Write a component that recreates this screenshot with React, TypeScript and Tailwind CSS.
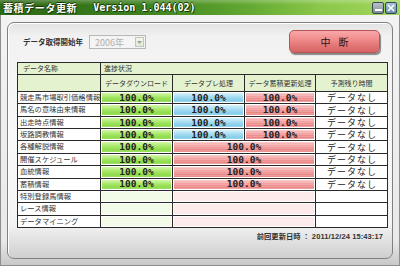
import React from "react";

const JP = "font-['Noto_Sans_CJK_JP','Noto_Sans',sans-serif]";
const MONO = "font-['DejaVu_Sans_Mono','Liberation_Mono',monospace]";

const names = [
  "競走馬市場取引価格情報",
  "馬名の意味由来情報",
  "出走時点情報",
  "坂路調教情報",
  "各種解説情報",
  "開催スケジュール",
  "血統情報",
  "蓄積情報",
  "特別登録馬情報",
  "レース情報",
  "データマイニング",
];

const GREEN =
  "bg-[linear-gradient(to_bottom,#d4f6ac,#a6e766_45%,#8edb4c_80%,#9fe064)]";
const BLUE =
  "bg-[linear-gradient(to_bottom,#d6f1fb,#a6dcf2_45%,#86cdea_80%,#98d5ee)]";
const RED =
  "bg-[repeating-linear-gradient(to_bottom,rgba(255,255,255,0.18)_0px,rgba(255,255,255,0.18)_1px,transparent_1px,transparent_2px),linear-gradient(to_bottom,#f8c4c4,#f19a9a_45%,#e98282_80%,#ee9494)]";

function Bar({ cls, text }: { cls: string; text?: string }) {
  return (
    <div className="bg-white p-[1px] flex overflow-hidden">
      <div
        className={`flex-1 flex items-center justify-center ${cls} ${MONO} font-bold text-[9.5px] leading-none text-[#222]`}
      >
        {text}
      </div>
    </div>
  );
}

function HeadCell({ children, className = "" }: { children?: React.ReactNode; className?: string }) {
  return (
    <div
      className={`bg-[#e4f2cf] flex items-center ${JP} text-[7px] leading-none text-[#333] overflow-hidden ${className}`}
    >
      {children}
    </div>
  );
}

export default function App() {
  return (
    <div className="w-[400px] h-[266px] overflow-hidden flex flex-col bg-[#e2e2e2]">
      {/* title bar */}
      <div className="h-[15px] shrink-0 flex items-center relative bg-[linear-gradient(to_right,#2d6814,#3c801e_35%,#5fa52f_60%,#8ac74a_80%,#a3d65e)]">
        <div className="absolute inset-x-0 top-0 h-[5px] bg-[linear-gradient(to_bottom,rgba(255,255,255,0.25),rgba(255,255,255,0))]" />
        <div className="relative pl-[3px] flex items-center text-white font-bold [text-shadow:1px_1px_0_#173a08,-1px_0_0_#173a08,0_-1px_0_#173a08] leading-none">
          <span className={`${JP} text-[10px] tracking-[0.6px]`}>蓄積データ更新</span>
          <span className={`${MONO} text-[10px] ml-[16px]`}>Version 1.044(02)</span>
        </div>
        <div className="ml-auto mr-[3px] flex gap-[1px] relative">
          <div className="w-[12px] h-[12px] rounded-[2px] border border-[#3e4a52] bg-[linear-gradient(to_bottom,#b9c3ca,#7d8b95)] flex items-end justify-center pb-[2px]">
            <div className="w-[7px] h-[2px] bg-white" />
          </div>
          <div className="w-[12px] h-[12px] rounded-[2px] border border-[#34485a] bg-[linear-gradient(to_bottom,#a9c4da,#6a8fae)] flex items-center justify-center">
            <svg width="8" height="8" viewBox="0 0 8 8">
              <path d="M1 1 L7 7 M7 1 L1 7" stroke="white" strokeWidth="1.6" />
            </svg>
          </div>
        </div>
      </div>

      {/* body */}
      <div className="flex-1 flex flex-col px-[6px] pt-[7px] pb-[6px] border-x border-b border-[#8e8e8e] bg-[linear-gradient(to_bottom,#f3f3f3,#e9e9e9_90%,#c8c8c8)]">
        <div className="flex-1 flex flex-col rounded-[7px] border border-[#808080] bg-[linear-gradient(to_bottom,#e2e2e2,#f2f2f2_6%,#f8f8f8_50%,#f4f4f4_85%,#cfcfcf)] shadow-[inset_1px_1px_0_#ffffff]">
          {/* top row */}
          <div className="flex items-center pt-[7px]">
            <div className="flex items-center ml-[15px] mt-[1px]">
              <span className={`${JP} text-[7.5px] font-bold text-[#333] leading-none`}>データ取得開始年</span>
              <div className="ml-[6px] w-[57px] h-[14px] border border-[#b8b8b8] bg-[#f4f4f4] flex items-center">
                <span className={`ml-[5px] ${JP} text-[9px] leading-none text-[#b0b0b0]`}>2006年</span>
                <div className="ml-auto mr-[1px] w-[9px] h-[10px] border border-[#c4c4c4] bg-[linear-gradient(to_bottom,#f2f8ea,#dfe9d2)] flex items-center justify-center">
                  <svg width="5" height="3" viewBox="0 0 5 3">
                    <path d="M0 0 L5 0 L2.5 3 Z" fill="#a0a0a0" />
                  </svg>
                </div>
              </div>
            </div>
            <div className="ml-auto mr-[12px] w-[91px] h-[23px] rounded-[5px] border border-[#b65454] bg-[linear-gradient(to_bottom,#f9a8a8,#f08c8c_40%,#e07272_75%,#d86464)] shadow-[1px_2px_1px_rgba(0,0,0,0.45)] flex items-center justify-center">
              <span className={`${JP} text-[10px] leading-none text-[#2a1515] tracking-[8px] pl-[8px]`}>中断</span>
            </div>
          </div>

          {/* table */}
          <div className="ml-[9px] mt-[9px] w-[371px] h-[166px] grid grid-cols-[82px_71px_71px_70px_71px] grid-rows-[11px_16px_repeat(11,minmax(0,1fr))] gap-px p-px bg-[#2a2a2a]">
            <HeadCell className="pl-[5px]">データ名称</HeadCell>
            <HeadCell className="col-span-4 pl-[3px]">進捗状況</HeadCell>
            <HeadCell />
            <HeadCell className="justify-center">データダウンロード</HeadCell>
            <HeadCell className="justify-center">データプレ処理</HeadCell>
            <HeadCell className="justify-center">データ蓄積更新処理</HeadCell>
            <HeadCell className="justify-center">予測残り時間</HeadCell>

            {names.map((n, i) => {
              const kind = i < 4 ? "full" : i < 8 ? "merged" : "empty";
              return (
                <React.Fragment key={n}>
                  <div className={`bg-white flex items-center pl-[2px] ${JP} text-[7.3px] leading-none text-[#333] whitespace-nowrap overflow-hidden`}>
                    {n}
                  </div>
                  {kind === "full" && (
                    <>
                      <Bar cls={GREEN} text="100.0%" />
                      <Bar cls={BLUE} text="100.0%" />
                      <Bar cls={RED} text="100.0%" />
                    </>
                  )}
                  {kind === "merged" && (
                    <>
                      <Bar cls={GREEN} text="100.0%" />
                      <div className="col-span-2 grid overflow-hidden">
                        <Bar cls={RED} text="100.0%" />
                      </div>
                    </>
                  )}
                  {kind === "empty" && (
                    <>
                      <Bar cls="bg-[#f1fbe8]" />
                      <div className="col-span-2 grid overflow-hidden">
                        <Bar cls="bg-[#fdeaea]" />
                      </div>
                    </>
                  )}
                  <div className="bg-white flex items-center justify-center overflow-hidden">
                    {kind !== "empty" && (
                      <span className={`${JP} text-[9px] leading-[9px] h-[9px] text-[#222] tracking-[1px] pl-[1px]`}>データなし</span>
                    )}
                  </div>
                </React.Fragment>
              );
            })}
          </div>

          {/* last update */}
          <div className="self-end mr-[9px] mt-[5px] flex items-center leading-none text-[#333]">
            <span className={`${JP} text-[7.3px] font-bold`}>前回更新日時</span>
            <span className={`${JP} text-[7.3px] font-bold ml-[2px]`}>：</span>
            <span className="font-['Liberation_Sans',sans-serif] text-[7.5px] font-bold ml-[2px] tracking-[0.1px]">
              2011/12/24 15:43:17
            </span>
          </div>
        </div>
      </div>
    </div>
  );
}
